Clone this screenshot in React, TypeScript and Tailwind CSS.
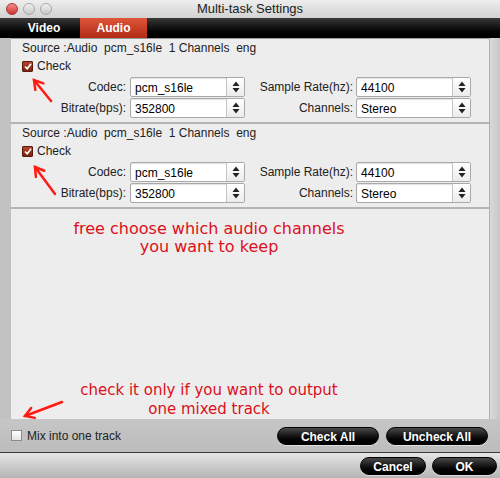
import React from 'react'

const ui = { fontFamily: '"Liberation Sans", Arial, sans-serif' }
const note = { fontFamily: '"DejaVu Sans", Verdana, sans-serif' }

const Spinner = () => (
  <svg width="8" height="12" viewBox="0 0 8 12">
    <path d="M4 0.5 L7.5 5 L0.5 5 Z" fill="#222" />
    <path d="M4 11.5 L7.5 7 L0.5 7 Z" fill="#222" />
  </svg>
)

const Select = ({ value }: { value: string }) => (
  <div className="flex h-[20px] w-[115px] items-stretch rounded-[2px] border border-[#a9a9a9] bg-white shadow-[inset_0_1px_1px_rgba(0,0,0,0.12)]">
    <div className="flex flex-1 items-center pl-[4px] pt-[2px] text-[12px] text-black">{value}</div>
    <div className="flex w-[18px] items-center justify-center border-l border-[#c4c4c4] bg-gradient-to-b from-[#ffffff] to-[#ececec]">
      <Spinner />
    </div>
  </div>
)

const Row = ({ l1, v1, l2, v2 }: { l1: string; v1: string; l2: string; v2: string }) => (
  <div className="flex h-[20px] items-center">
    <div className="w-[119px] pr-[4px] text-right text-[12px] text-[#222]">{l1}</div>
    <Select value={v1} />
    <div className="w-[111px] pr-[3px] text-right text-[12px] text-[#222]">{l2}</div>
    <Select value={v2} />
  </div>
)

const Section = () => (
  <div className="flex h-[85px] flex-col border-b-2 border-[#b4b4b4] pt-[2px]">
    <div className="pl-[11px] text-[12px] leading-[14px] text-[#222] whitespace-pre">
      Source :Audio  pcm_s16le  1 Channels  eng
    </div>
    <div className="mt-[4px] flex h-[14px] items-center pl-[11px]">
      <div className="flex h-[11px] w-[11px] items-center justify-center rounded-[1px] border border-[#5a1a0e] bg-gradient-to-b from-[#b8432a] to-[#7a2312]">
        <svg width="8" height="7" viewBox="0 0 8 7">
          <path d="M1 3.5 L3.2 5.8 L7 0.8" stroke="#fff" strokeWidth="1.6" fill="none" />
        </svg>
      </div>
      <span className="ml-[4px] text-[12px] text-[#222]">Check</span>
    </div>
    <div className="mt-[4px] flex flex-col gap-[1px]">
      <Row l1="Codec:" v1="pcm_s16le" l2="Sample Rate(hz):" v2="44100" />
      <Row l1="Bitrate(bps):" v1="352800" l2="Channels:" v2="Stereo" />
    </div>
  </div>
)

const PillButton = ({ label, w }: { label: string; w: string }) => (
  <button
    className={`${w} h-[18px] rounded-full border border-[#000] bg-gradient-to-b from-[#4a4a4a] via-[#151515] to-[#000] text-[12px] font-bold text-white shadow-[0_1px_0_rgba(255,255,255,0.5)]`}
  >
    {label}
  </button>
)

const Arrow = ({ x1, y1, x2, y2 }: { x1: number; y1: number; x2: number; y2: number }) => {
  const a = Math.atan2(y2 - y1, x2 - x1)
  const L = 10
  const p1 = [x2 - L * Math.cos(a - 0.55), y2 - L * Math.sin(a - 0.55)]
  const p2 = [x2 - L * Math.cos(a + 0.55), y2 - L * Math.sin(a + 0.55)]
  return (
    <g stroke="#ff1a12" strokeWidth="2.5" strokeLinecap="round" fill="none">
      <line x1={x1} y1={y1} x2={x2} y2={y2} />
      <polyline points={`${p1[0]},${p1[1]} ${x2},${y2} ${p2[0]},${p2[1]}`} />
    </g>
  )
}

export default function App() {
  return (
    <div className="relative flex h-[478px] w-[500px] flex-col overflow-hidden bg-[#c2c2c2]" style={ui}>
      {/* title bar */}
      <div className="relative flex h-[18px] items-center justify-center bg-gradient-to-b from-[#eeeeee] to-[#d2d2d2]">
        <div className="absolute left-[6px] top-[3px] flex gap-[5px]">
          <div className="h-[12px] w-[12px] rounded-full border border-[#a53a3a] bg-gradient-to-b from-[#f08a8a] to-[#d0302f]" />
          <div className="h-[12px] w-[12px] rounded-full border border-[#a8a8a8] bg-gradient-to-b from-[#f2f2f2] to-[#c8c8c8]" />
          <div className="h-[12px] w-[12px] rounded-full border border-[#a8a8a8] bg-gradient-to-b from-[#f2f2f2] to-[#c8c8c8]" />
        </div>
        <span className="text-[13px] text-[#222]">Multi-task Settings</span>
      </div>

      {/* tabs */}
      <div className="flex h-[20px] items-stretch bg-gradient-to-b from-[#3a3a3a] via-[#111] to-[#000]">
        <div className="flex w-[80px] items-center justify-center pl-[8px] text-[12px] font-bold text-white">Video</div>
        <div className="flex w-[67px] items-center justify-center bg-gradient-to-b from-[#e0553a] to-[#b02a14] text-[12px] font-bold text-white">
          Audio
        </div>
      </div>

      {/* body */}
      <div className="flex h-[381px] pl-[11px]">
        <div className="flex w-[478px] flex-col border-t border-[#9a9a9a] bg-[#ededed]">
          <Section />
          <Section />
          <div className="flex flex-1 flex-col items-center pr-[82px] text-[#dc1020]" style={note}>
            <div className="mt-[11px] text-[16px] leading-[18px]">free choose which audio channels</div>
            <div className="text-[16px] leading-[18px]">you want to keep</div>
            <div className="flex-1" />
            <div className="text-[15px] leading-[19px]">check it only if you want to output</div>
            <div className="text-[15px] leading-[19px]">one mixed track</div>
          </div>
        </div>
        <div className="w-[11px] border-l border-[#b0b0b0] bg-gradient-to-r from-[#d8d8d8] to-[#c8c8c8]" />
      </div>

      {/* bottom controls */}
      <div className="flex h-[33px] items-center bg-gradient-to-b from-[#c6c6c6] to-[#bcbcbc] pl-[11px] pr-[12px]">
        <div className="h-[11px] w-[11px] border border-[#8a8a8a] bg-gradient-to-b from-[#ffffff] to-[#e4e4e4]" />
        <span className="ml-[5px] text-[12px] text-[#222]">Mix into one track</span>
        <div className="flex-1" />
        <div className="flex gap-[7px]">
          <PillButton label="Check All" w="w-[102px]" />
          <PillButton label="Uncheck All" w="w-[102px]" />
        </div>
      </div>

      {/* footer */}
      <div className="flex flex-1 items-center justify-end gap-[6px] border-t border-[#3a3a3a] bg-gradient-to-b from-[#e6e6e6] to-[#b4b4b4] pr-[3px]">
        <PillButton label="Cancel" w="w-[66px]" />
        <PillButton label="OK" w="w-[65px]" />
      </div>

      {/* annotation arrows */}
      <svg className="pointer-events-none absolute left-0 top-0" width="500" height="478">
        <Arrow x1={51} y1={101} x2={34} y2={80} />
        <Arrow x1={55} y1={194} x2={35} y2={167} />
        <Arrow x1={62} y1={402} x2={25} y2={416} />
      </svg>
    </div>
  )
}
